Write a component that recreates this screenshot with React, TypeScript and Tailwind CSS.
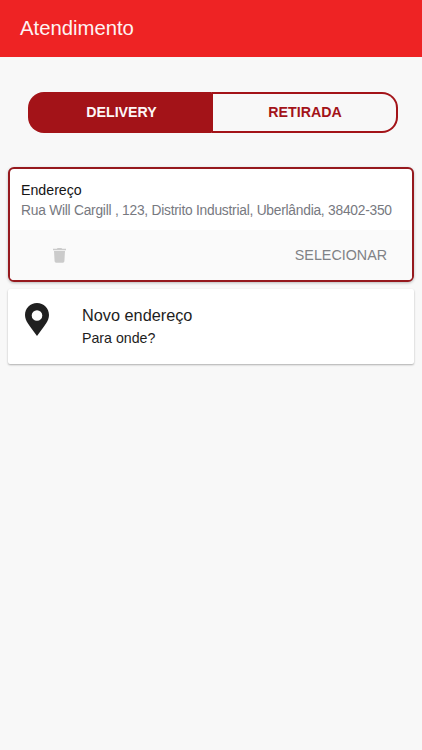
function ServiceToggle() {
  return (
    <div className="ml-7 mt-[35px] flex h-[41px] w-[370px] text-[14.2px] font-bold">
      <button className="w-[185px] rounded-l-[16px] rounded-r-[2px] bg-[#a31318] pl-0.5 text-[#fdf7f7]">DELIVERY</button>
      <button className="-ml-px flex-1 rounded-r-[16px] border-2 border-l-0 border-[#a31318] pl-0.5 text-[#a31318]">RETIRADA</button>
    </div>
  )
}

function AddressCard() {
  return (
    <section className="mx-2 mt-[34px] h-[115px] overflow-hidden rounded-[6px] border-2 border-[#96191e] bg-white shadow-[0_1px_3px_rgba(0,0,0,0.25)]">
      <div className="h-[61px] pl-[11px] pt-[11px] whitespace-nowrap">
        <h2 className="text-[14.2px] leading-[20px] text-[#151515]">Endereço</h2>
        <p className="text-[13.8px] leading-[21px] tracking-[-0.25px] text-[#77797f]">
          Rua Will Cargill , 123, Distrito Industrial, Uberlândia, 38402-350
        </p>
      </div>
      <div className="flex h-[50px] items-center justify-between bg-[#fafafa] pl-[43px] pr-[25px]">
        <button aria-label="Excluir">
          <svg width="13" height="15" viewBox="0 0 13 15" fill="#cbcbcb">
            <path d="M0 .8h3.800L4.600 0h3.800l.8.8H13v1.400H0zM1 3h11l-.6 10.300a1.500 1.500 0 0 1-1.500 1.400H3.100a1.500 1.500 0 0 1-1.500-1.400z" />
          </svg>
        </button>
        <button className="pt-px text-[14.3px] text-[#808286]">SELECIONAR</button>
      </div>
    </section>
  )
}

function NewAddressCard() {
  return (
    <section className="mx-2 mt-[7px] flex h-[75px] rounded-[2px] bg-white shadow-[0_1px_2px_rgba(0,0,0,0.3)]">
      <svg className="ml-[17px] mt-[14px] shrink-0" width="24" height="33" viewBox="0 0 24 33" fill="#202020">
        <path fillRule="evenodd" d="M12 0C5.200 0 0 5.200 0 11.900c0 3.200 1.300 5.800 2.800 8.300C5.600 24.700 9.200 29 12 33c2.800-4 6.400-8.300 9.200-12.800 1.500-2.500 2.800-5.100 2.800-8.300C24 5.200 18.800 0 12 0zm0 17.800a5.300 5.300 0 1 1 0-10.600 5.300 5.300 0 0 1 0 10.600z" />
      </svg>
      <div className="ml-[33px] pt-[14px] text-[#1d1d1d]">
        <h2 className="text-[16.3px] leading-[24px]">Novo endereço</h2>
        <p className="text-[14.2px] leading-[22px]">Para onde?</p>
      </div>
    </section>
  )
}

export default function App() {
  return (
    <div className="h-[750px] w-full overflow-hidden bg-[#f8f8f8] font-['Liberation_Sans',Arial,sans-serif]">
      <header className="flex h-[57px] items-center bg-[#ee2324] pl-5">
        <h1 className="text-[20.3px] text-[#fdf3f3]">Atendimento</h1>
      </header>
      <ServiceToggle />
      <AddressCard />
      <NewAddressCard />
    </div>
  )
}
